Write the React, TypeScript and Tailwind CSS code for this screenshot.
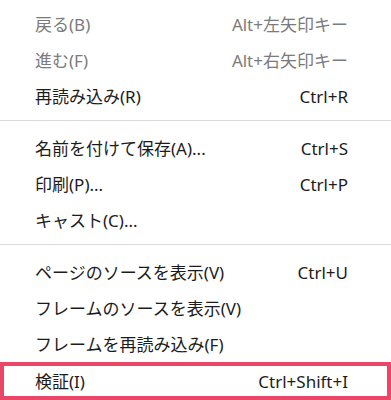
import React from "react";

type Item = { label: string; shortcut?: string; disabled?: boolean; highlight?: boolean };

const sections: Item[][] = [
  [
    { label: "戻る(B)", shortcut: "Alt+左矢印キー", disabled: true },
    { label: "進む(F)", shortcut: "Alt+右矢印キー", disabled: true },
    { label: "再読み込み(R)", shortcut: "Ctrl+R" },
  ],
  [
    { label: "名前を付けて保存(A)...", shortcut: "Ctrl+S" },
    { label: "印刷(P)...", shortcut: "Ctrl+P" },
    { label: "キャスト(C)..." },
  ],
  [
    { label: "ページのソースを表示(V)", shortcut: "Ctrl+U" },
    { label: "フレームのソースを表示(V)" },
    { label: "フレームを再読み込み(F)" },
    { label: "検証(I)", shortcut: "Ctrl+Shift+I", highlight: true },
  ],
];

function Row({ item }: { item: Item }) {
  const color = item.disabled ? "text-[#7b7b7b]" : "text-[#1c1c1c]";
  if (item.highlight) {
    return (
      <div className={`flex h-[38px] items-center justify-between border-4 border-[#ea4667] pl-[31px] pr-[39px] ${color}`}>
        <span>{item.label}</span>
        <span>{item.shortcut}</span>
      </div>
    );
  }
  return (
    <div className={`flex h-[36px] items-center justify-between pl-[35px] pr-[43px] ${color}`}>
      <span>{item.label}</span>
      {item.shortcut && <span>{item.shortcut}</span>}
    </div>
  );
}

export default function App() {
  return (
    <div
      className="w-[391px] h-[400px] overflow-hidden bg-white pt-[6px] text-[17px] leading-none"
      style={{ fontFamily: '"Noto Sans", "Noto Sans CJK JP", sans-serif' }}
    >
      {sections.map((sec, i) => (
        <div key={i}>
          {i > 0 && <div className="mt-[6px] mb-[9px] h-px bg-[#dadada]" />}
          {sec.map((it, j) => (
            <Row key={j} item={it} />
          ))}
        </div>
      ))}
    </div>
  );
}
